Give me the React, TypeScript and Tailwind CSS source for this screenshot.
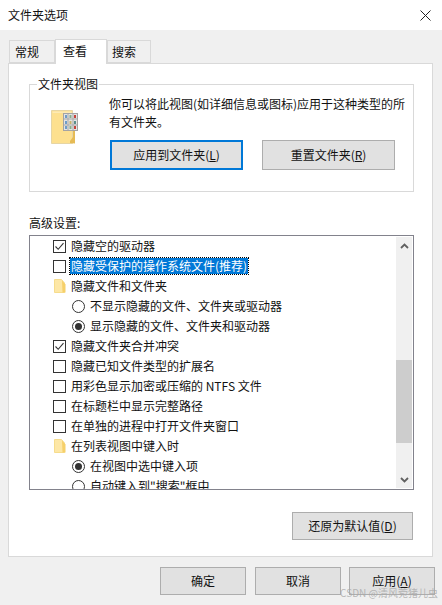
const font = "font-['Microsoft_YaHei','Noto_Sans_CJK_SC','Liberation_Sans',sans-serif]";

type Row = { kind: "check" | "radio" | "folder"; label: string; on?: boolean; selected?: boolean };

const rows: Row[] = [
  { kind: "check", label: "隐藏空的驱动器", on: true },
  { kind: "check", label: "隐藏受保护的操作系统文件(推荐)", selected: true },
  { kind: "folder", label: "隐藏文件和文件夹" },
  { kind: "radio", label: "不显示隐藏的文件、文件夹或驱动器" },
  { kind: "radio", label: "显示隐藏的文件、文件夹和驱动器", on: true },
  { kind: "check", label: "隐藏文件夹合并冲突", on: true },
  { kind: "check", label: "隐藏已知文件类型的扩展名" },
  { kind: "check", label: "用彩色显示加密或压缩的 NTFS 文件" },
  { kind: "check", label: "在标题栏中显示完整路径" },
  { kind: "check", label: "在单独的进程中打开文件夹窗口" },
  { kind: "folder", label: "在列表视图中键入时" },
  { kind: "radio", label: "在视图中选中键入项", on: true },
  { kind: "radio", label: "自动键入到\"搜索\"框中" },
];

function SmallFolder() {
  return (
    <svg width="12" height="14" viewBox="0 0 12 14" className="shrink-0">
      <path d="M0.5 0.5H7.5L10.5 4V13.5H0.5Z" fill="#fde7a6" stroke="#f6dc8c" />
      <path d="M8 1.5L11.5 5.5V13.5H8.5Z" fill="#f6d06a" />
    </svg>
  );
}

function BigFolder() {
  return (
    <svg width="27" height="34" viewBox="0 0 27 34">
      <path d="M0.5 0.5H21.5V33.5H0.5Z" fill="#fde08f" stroke="#e6d5a4" />
      <path d="M1.5 1.5H20.5V3H1.5Z" fill="#fdeab4" />
      <path d="M19 33V31L22 27V21H24V33.5Z" fill="#e6bb55" />
      <rect x="12.5" y="3.5" width="14" height="17" fill="#e4e4e4" stroke="#a4a4a4" />
      <path d="M13 9H26M13 15H26M17 4V20M22 4V20" stroke="#a9a9a9" strokeWidth="1" />
      <rect x="14" y="5" width="2" height="3" fill="#6f9cc8" />
      <rect x="18.5" y="5" width="2" height="3" fill="#86b08c" />
      <rect x="23" y="5" width="2" height="3" fill="#c6423c" />
      <rect x="14" y="11" width="2" height="3" fill="#6f9cc8" />
      <rect x="18.5" y="11" width="2" height="3" fill="#c9b26a" />
      <rect x="23" y="11" width="2" height="3" fill="#5a8f8c" />
      <rect x="14" y="16" width="2" height="3" fill="#6f9cc8" />
      <rect x="18.5" y="16" width="2" height="3" fill="#86b08c" />
      <rect x="23" y="16" width="2" height="3" fill="#c6423c" />
    </svg>
  );
}

function Mark({ row }: { row: Row }) {
  if (row.kind === "folder") {
    return (
      <div className="flex w-[13px] shrink-0 justify-center">
        <SmallFolder />
      </div>
    );
  }
  if (row.kind === "radio") {
    return (
      <div className="ml-[19px] flex h-[13px] w-[13px] shrink-0 items-center justify-center rounded-full border border-[#333333] bg-white">
        {row.on ? <div className="h-[7px] w-[7px] rounded-full bg-[#333333]" /> : null}
      </div>
    );
  }
  return (
    <div className="flex h-[13px] w-[13px] shrink-0 items-center justify-center border border-[#333333] bg-white">
      {row.on ? (
        <svg width="11" height="11" viewBox="0 0 11 11">
          <path d="M1.5 5.5L4.2 8.3L9.5 2.2" fill="none" stroke="#333333" strokeWidth="1.1" />
        </svg>
      ) : null}
    </div>
  );
}

function SettingRow({ row }: { row: Row }) {
  return (
    <div className="flex h-5 shrink-0 items-center">
      <Mark row={row} />
      <span
        className={[
          "ml-[4px] whitespace-pre px-[1px] leading-4",
          row.selected
            ? "bg-[#0078d7] text-white outline-1 outline-dotted outline-black"
            : "",
        ].join(" ")}
      >
        {row.label}
      </span>
    </div>
  );
}

function Button({
  children,
  className,
}: {
  children: React.ReactNode;
  className: string;
}) {
  return (
    <button
      type="button"
      className={["flex items-center justify-center bg-[#e1e1e1]", className].join(" ")}
    >
      {children}
    </button>
  );
}

function Tab({ label, active, className }: { label: string; active?: boolean; className: string }) {
  if (active) {
    return (
      <div className={["z-10 -mb-px flex h-[25px] items-center border border-b-0 border-[#d9d9d9] bg-white pb-[2px]", className].join(" ")}>
        {label}
      </div>
    );
  }
  return (
    <div className={["flex h-[23px] items-center border border-[#d9d9d9] bg-[#f0f0f0]", className].join(" ")}>
      {label}
    </div>
  );
}

export default function App() {
  return (
    <div className={`relative flex h-[605px] w-[442px] flex-col overflow-hidden bg-[#f0f0f0] text-[12px] leading-5 text-[#111111] ${font}`}>
      <div className="flex h-[30px] shrink-0 items-center justify-between bg-white pl-2 pr-[11px]">
        <span>文件夹选项</span>
        <svg width="11" height="11" viewBox="0 0 11 11">
          <path d="M0.5 0.5L10.5 10.5M10.5 0.5L0.5 10.5" stroke="#222222" strokeWidth="1" />
        </svg>
      </div>

      <div className="flex h-[33px] shrink-0 items-end pl-[9px]">
        <Tab label="常规" className="w-[46px] pl-[5px]" />
        <Tab label="查看" active className="w-[52px] pl-[7px]" />
        <Tab label="搜索" className="w-[44px] pl-[4px]" />
      </div>

      <div className="ml-2 flex h-[494px] w-[425px] shrink-0 flex-col border border-[#d9d9d9] bg-white px-5 pt-5">
        <div className="relative h-[108px] w-[385px] shrink-0 border border-[#d9d9d9] pl-[80px] pt-[10px]">
          <span className="absolute -top-[11px] left-[7px] bg-white px-[1px]">文件夹视图</span>
          <div className="absolute left-[21px] top-[25px]">
            <BigFolder />
          </div>
          <p className="-ml-px w-[297px] leading-[17.5px]">
            你可以将此视图(如详细信息或图标)应用于这种类型的所有文件夹。
          </p>
          <div className="mt-[10px] flex gap-[19px]">
            <Button className="h-[30px] w-[133px] border-2 border-[#0078d7]">
              <span>
                应用到文件夹(<u>L</u>)
              </span>
            </Button>
            <Button className="h-[30px] w-[133px] border border-[#adadad]">
              <span>
                重置文件夹(<u>R</u>)
              </span>
            </Button>
          </div>
        </div>

        <div className="mt-[21px] h-[20px] shrink-0">高级设置:</div>

        <div className="mt-[2px] flex h-[255px] w-[385px] shrink-0 overflow-hidden border border-[#82828c] bg-white">
          <div className="flex min-w-0 flex-1 flex-col overflow-hidden pl-[23px]">
            {rows.map((row) => (
              <SettingRow key={row.label} row={row} />
            ))}
          </div>
          <div className="my-px mr-px flex w-[16px] shrink-0 flex-col bg-[#f0f0f0]">
            <div className="flex h-[17px] shrink-0 items-center justify-center">
              <svg width="9" height="6" viewBox="0 0 9 6">
                <path d="M1 5L4.5 1.5L8 5" fill="none" stroke="#606060" strokeWidth="1.8" />
              </svg>
            </div>
            <div className="h-[106px] shrink-0" />
            <div className="h-[83px] shrink-0 bg-[#cdcdcd]" />
            <div className="flex-1" />
            <div className="flex h-[17px] shrink-0 items-center justify-center">
              <svg width="9" height="6" viewBox="0 0 9 6">
                <path d="M1 1L4.5 4.5L8 1" fill="none" stroke="#606060" strokeWidth="1.8" />
              </svg>
            </div>
          </div>
        </div>

        <div className="mt-[22px] flex w-[385px] shrink-0 justify-end pr-px">
          <Button className="h-[28px] w-[121px] border border-[#adadad]">
            <span>
              还原为默认值(<u>D</u>)
            </span>
          </Button>
        </div>
      </div>

      <div className="mt-[10px] flex shrink-0 justify-end gap-[8px] pr-[7px]">
        <Button className="mr-px h-[28px] w-[86px] border border-[#adadad]">确定</Button>
        <Button className="h-[28px] w-[86px] border border-[#adadad]">取消</Button>
        <Button className="h-[28px] w-[86px] border border-[#adadad]">
          <span>
            应用(<u>A</u>)
          </span>
        </Button>
      </div>

      <span className="absolute bottom-[5px] right-[4px] text-[10px] leading-[14px] text-[#a8a8a8]/80">
        CSDN @清风菀猪儿虫
      </span>
    </div>
  );
}
